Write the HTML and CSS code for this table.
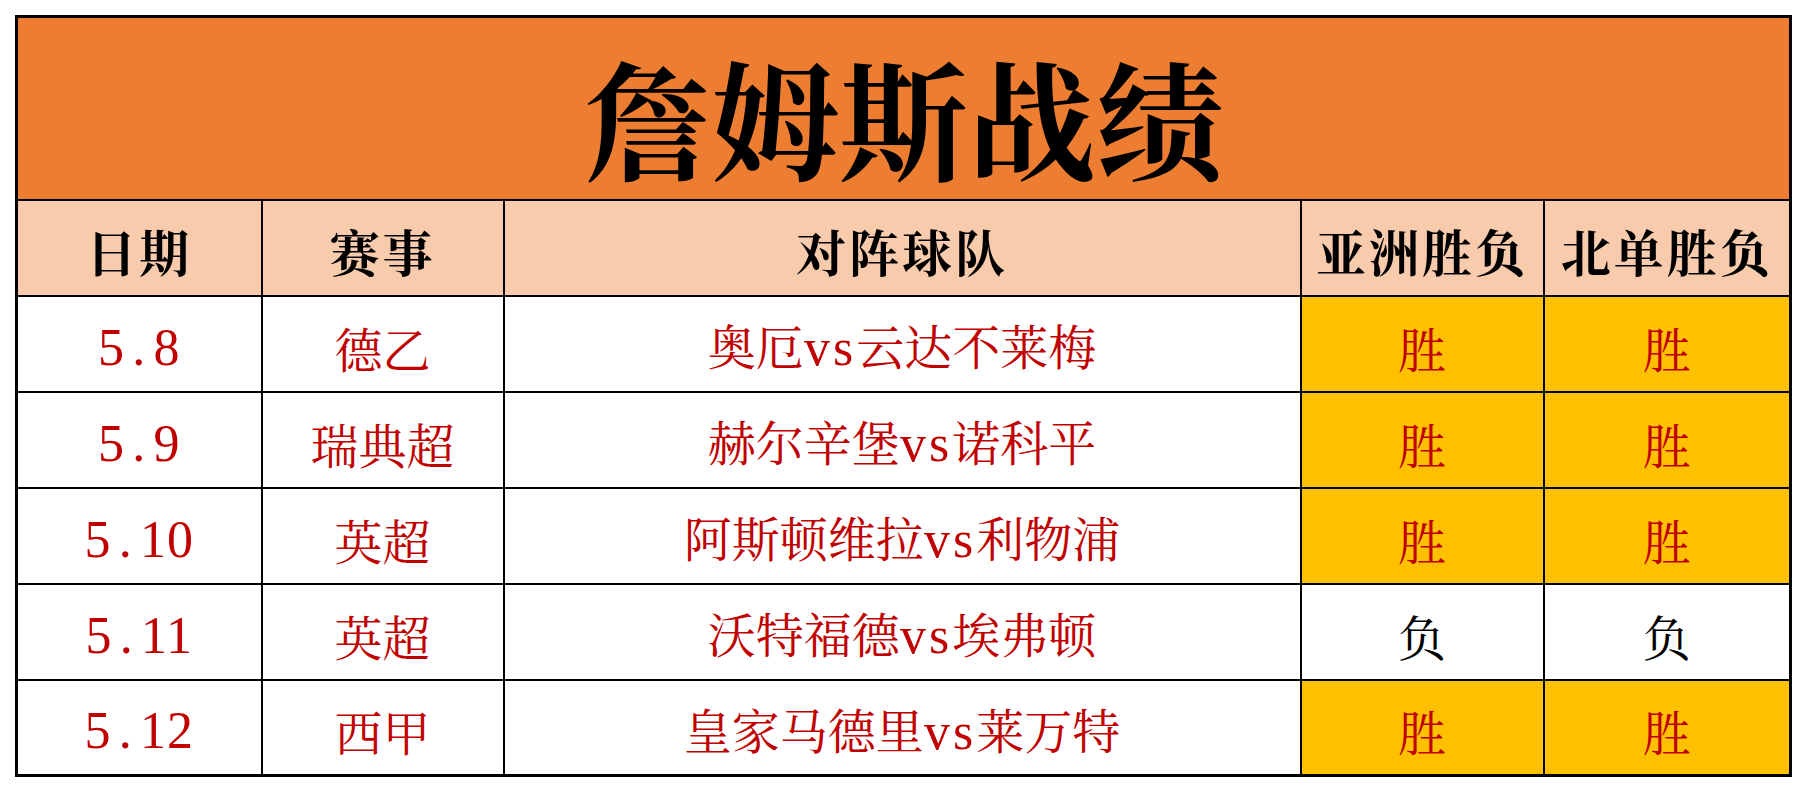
FILE: index.html
```html
<!DOCTYPE html>
<html lang="zh-CN">
<head>
<meta charset="utf-8">
<title>詹姆斯战绩</title>
<link rel="stylesheet" href="styles.css">
</head>
<body>
<table class="record">
  <colgroup>
    <col class="c-date">
    <col class="c-league">
    <col class="c-teams">
    <col class="c-asia">
    <col class="c-bd">
  </colgroup>
  <thead>
    <tr class="title-row"><th colspan="5" class="title">詹姆斯战绩</th></tr>
    <tr class="head-row">
      <th>日期</th>
      <th>赛事</th>
      <th>对阵球队</th>
      <th>亚洲胜负</th>
      <th>北单胜负</th>
    </tr>
  </thead>
  <tbody>
    <tr>
      <td class="num">5<span class="dot">.</span>8</td>
      <td>德乙</td>
      <td>奥厄<span class="vs">vs</span>云达不莱梅</td>
      <td class="win">胜</td>
      <td class="win">胜</td>
    </tr>
    <tr>
      <td class="num">5<span class="dot">.</span>9</td>
      <td>瑞典超</td>
      <td>赫尔辛堡<span class="vs">vs</span>诺科平</td>
      <td class="win">胜</td>
      <td class="win">胜</td>
    </tr>
    <tr>
      <td class="num">5<span class="dot">.</span>10</td>
      <td>英超</td>
      <td>阿斯顿维拉<span class="vs">vs</span>利物浦</td>
      <td class="win">胜</td>
      <td class="win">胜</td>
    </tr>
    <tr>
      <td class="num">5<span class="dot">.</span>11</td>
      <td>英超</td>
      <td>沃特福德<span class="vs">vs</span>埃弗顿</td>
      <td class="lose">负</td>
      <td class="lose">负</td>
    </tr>
    <tr>
      <td class="num">5<span class="dot">.</span>12</td>
      <td>西甲</td>
      <td>皇家马德里<span class="vs">vs</span>莱万特</td>
      <td class="win">胜</td>
      <td class="win">胜</td>
    </tr>
  </tbody>
</table>
</body>
</html>
```

FILE: styles.css
```css
html, body {
  margin: 0;
  padding: 0;
  background: #ffffff;
}

body {
  padding: 15px 0 0 15px;
  font-family: "Noto Serif CJK SC", "Noto Sans CJK SC", "Liberation Serif", serif;
}

.record {
  border-collapse: collapse;
  table-layout: fixed;
  width: 1774px;
  border: 3px solid #000;
}

.c-date { width: 245px; }
.c-league { width: 242px; }
.c-teams { width: 797px; }
.c-asia { width: 243px; }
.c-bd { width: 247px; }

.record th,
.record td {
  border: 2px solid #000;
  padding: 0;
  text-align: center;
  vertical-align: middle;
  line-height: 1;
}

.title-row th {
  height: 183px;
  background: #ED7D31;
  color: #000;
  font-size: 128px;
  font-weight: 700;
  padding-top: 16px;
  box-sizing: border-box;
}

.head-row th {
  height: 96px;
  background: #F8CBAD;
  color: #000;
  font-size: 50px;
  font-weight: 700;
  letter-spacing: 3px;
  padding-top: 4px;
  box-sizing: border-box;
}

.record td {
  height: 96px;
  background: #ffffff;
  color: #C00000;
  font-size: 48px;
  font-weight: 400;
  padding-top: 8px;
  box-sizing: border-box;
}

.record td.num {
  font-family: "Liberation Serif", serif;
  font-size: 52px;
  letter-spacing: 1px;
}

.dot {
  display: inline-block;
  width: 0.55em;
  text-align: center;
}

.vs {
  font-family: "Liberation Serif", serif;
  font-size: 52px;
  letter-spacing: 3px;
}

.record td.win {
  background: #FFC000;
  color: #C00000;
}

.record td.lose {
  background: #ffffff;
  color: #000000;
}
```
